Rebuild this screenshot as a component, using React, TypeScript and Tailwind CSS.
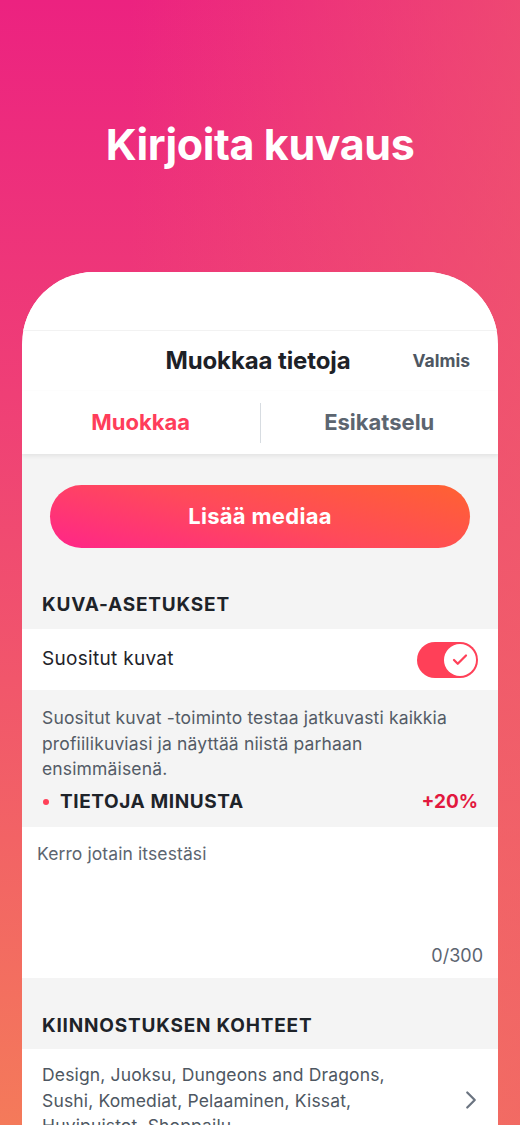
import { ChevronRight, Check } from "lucide-react";

const font = { fontFamily: "Inter, 'Open Sans', sans-serif" };

export default function App() {
  return (
    <div
      className="relative w-[520px] h-[1125px] overflow-hidden bg-[linear-gradient(to_right,rgba(240,96,106,0)_25%,rgba(240,96,106,0.6)_100%),linear-gradient(180deg,#EC2280_0%,#EF3F76_35%,#F47A5A_100%)]"
      style={font}
    >
      {/* Title */}
      <div className="h-[272px] flex items-start justify-center pt-[115px]">
        <h1 className="text-white font-bold text-[43px] leading-[58px] tracking-[-0.4px]">
          Kirjoita kuvaus
        </h1>
      </div>

      {/* Phone card */}
      <div className="mx-[22px] bg-white rounded-t-[72px] overflow-hidden h-[900px]">
        <div className="h-[58px] bg-white" />
        <div className="border-t border-[#F2F2F2]">
          {/* Header */}
          <div className="relative h-[60px] flex items-center justify-center">
            <span className="text-[24px] font-bold text-[#1D2127] ml-[-4px] tracking-[-0.1px]">
              Muokkaa tietoja
            </span>
            <span className="absolute right-[28px] text-[17.5px] font-bold text-[#4E5762]">
              Valmis
            </span>
          </div>
          {/* Tabs */}
          <div className="relative z-10 flex h-[63px] items-center shadow-[0_2px_4px_rgba(0,0,0,0.07)]">
            <div className="flex-1 text-center text-[22px] font-bold text-[#FF3D5A]">
              Muokkaa
            </div>
            <div className="w-px h-[40px] bg-[#D7DCE1]" />
            <div className="flex-1 text-center text-[22px] font-bold text-[#5C6570]">
              Esikatselu
            </div>
          </div>
        </div>

        <div className="bg-[#F4F4F4]">
          <div className="px-[28px] pt-[31px]">
            <button className="w-full h-[63px] rounded-full bg-[linear-gradient(15deg,#FF2589_0%,#FF4A5A_50%,#FF6231_100%)] text-white text-[22px] font-bold tracking-[0.3px]">
              Lisää mediaa
            </button>
          </div>
          <div className="h-[81px] flex items-end px-5 pb-[13px] text-[19px] leading-[23px] font-bold text-[#1E2329] tracking-[0.8px]">
            KUVA-ASETUKSET
          </div>
          <div className="bg-white h-[61px] flex items-center justify-between px-5">
            <span className="text-[19px] text-[#1E2329] tracking-[0.3px]">Suositut kuvat</span>
            <div className="w-[61px] h-[36px] rounded-full bg-[#FF4058] flex items-center justify-end pr-[2px]">
              <div className="w-[32px] h-[32px] rounded-full bg-white flex items-center justify-center">
                <Check size={18} strokeWidth={3} className="text-[#FF4058]" />
              </div>
            </div>
          </div>
          <div className="h-[137px] px-5 pt-[15px]">
            <p className="text-[17.5px] leading-[25.5px] text-[#535B66] tracking-[0.15px]">
              Suositut kuvat -toiminto testaa jatkuvasti kaikkia profiilikuviasi ja näyttää niistä parhaan ensimmäisenä.
            </p>
            <div className="flex items-center justify-between mt-[8px] leading-[24px]">
              <div className="flex items-center">
                <span className="w-[6px] h-[6px] rounded-full bg-[#FF4058] ml-[1px] mr-[11px]" />
                <span className="text-[19px] font-bold text-[#1E2329] tracking-[0.6px]">TIETOJA MINUSTA</span>
              </div>
              <span className="text-[19px] font-bold text-[#E2183E]">+20%</span>
            </div>
          </div>
        </div>

        <div className="bg-white h-[151px] flex flex-col justify-between px-[15px] pt-[16px] pb-[11px]">
          <span className="text-[17.5px] leading-[22px] text-[#5C6570] tracking-[0.1px]">Kerro jotain itsestäsi</span>
          <span className="self-end text-[18px] leading-[22px] text-[#5C6570]">0/300</span>
        </div>

        <div className="bg-[#F4F4F4] h-[71px] flex items-end px-5 pb-[12px]">
          <span className="text-[19px] leading-[23px] font-bold text-[#1E2329] tracking-[0.8px]">
            KIINNOSTUKSEN KOHTEET
          </span>
        </div>
        <div className="bg-white flex items-center px-5 pt-[13px]">
          <p className="w-[380px] text-[17.5px] leading-[25.5px] text-[#4E5762] tracking-[0.15px]">
            Design, Juoksu, Dungeons and Dragons, Sushi, Komediat, Pelaaminen, Kissat, Huvipuistot, Shoppailu
          </p>
          <div className="flex-1" />
          <ChevronRight size={30} strokeWidth={1.8} className="text-[#6B7480] mr-[-8px]" />
        </div>
      </div>
    </div>
  );
}
